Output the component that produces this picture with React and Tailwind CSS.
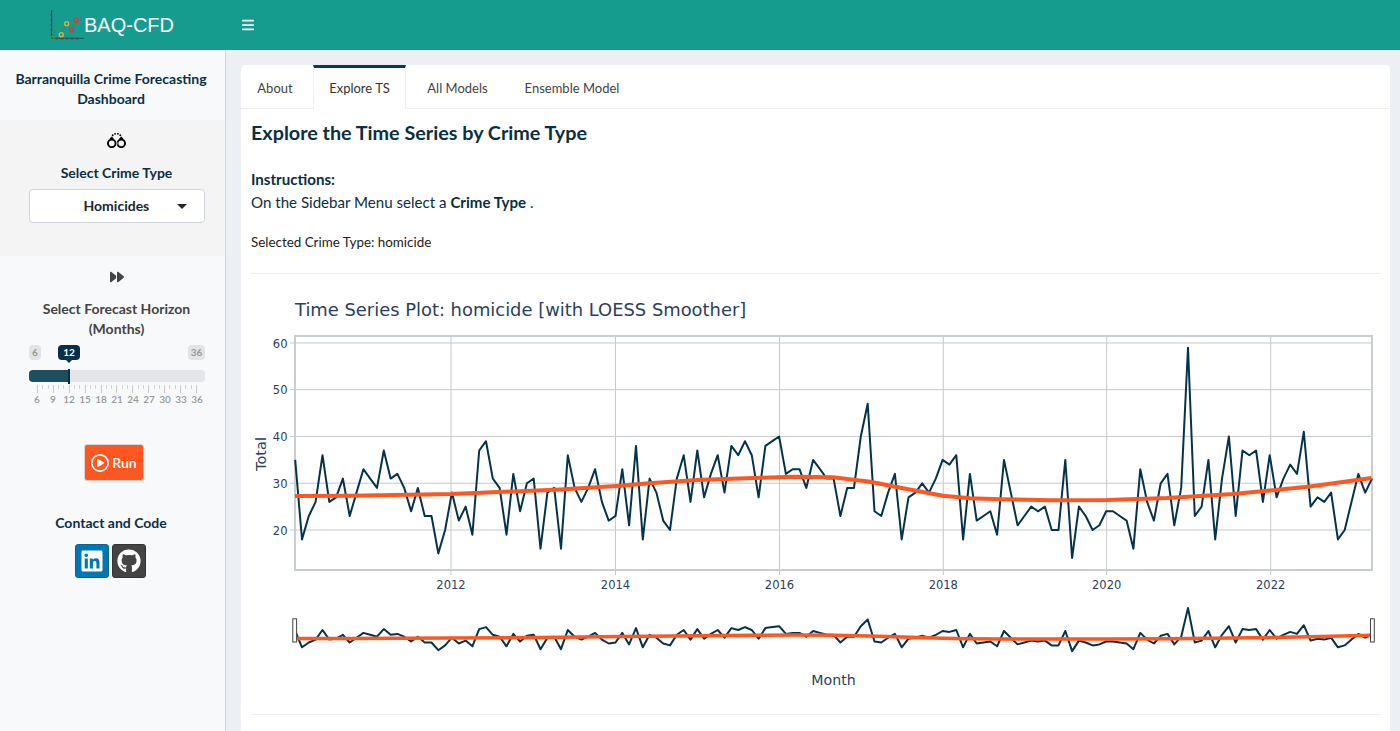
import React from "react";
import { FaBars, FaForward, FaGithub, FaLinkedin, FaRegCirclePlay, FaHandcuffs } from "react-icons/fa6";

const totals = [
  35, 18, 23, 26, 36, 26, 27, 31, 23, 28, 33, 31, 29, 37, 31, 32, 29, 24, 29, 23, 23, 15, 20, 28,
  22, 25, 19, 37, 39, 31, 29, 19, 32, 24, 30, 31, 16, 28, 29, 16, 36, 29, 26, 29, 33, 26, 22, 23,
  33, 21, 38, 18, 31, 28, 22, 20, 31, 36, 26, 37, 27, 32, 36, 28, 38, 36, 39, 36, 27, 38, 39, 40,
  32, 33, 33, 29, 35, 33, 31, 31, 23, 29, 29, 40, 47, 24, 23, 28, 32, 18, 27, 28, 30, 28, 31, 35,
  34, 36, 18, 32, 22, 23, 24, 19, 35, 28, 21, 23, 25, 24, 25, 20, 20, 35, 14, 25, 23, 20, 21, 24,
  24, 23, 22, 16, 33, 26, 22, 30, 32, 21, 29, 59, 23, 25, 35, 18, 31, 40, 23, 37, 36, 37, 26, 36,
  27, 31, 34, 32, 41, 25, 27, 26, 28, 18, 20, 26, 32, 28, 31,
];

// loess curve read off the plot, as [x, y] in page pixels
const loess = [
  [295, 497], [350, 496.8], [451, 495], [560, 490.5], [620, 486.7], [649, 484.3], [697, 481], [753, 479],
  [793, 477.7], [833, 478.3], [870, 482.7], [903, 489.3], [943, 496.7], [970, 499.3], [1000, 500.2],
  [1050, 501.3], [1107, 501], [1167, 499], [1233, 495], [1310, 487.5], [1371.5, 479],
];

const xOf = (i) => 295.2 + i * 6.815;
const mainLine = totals.map((v, i) => `${xOf(i).toFixed(1)},${(531 - (v - 20) * 4.675).toFixed(1)}`).join(" ");
const miniLine = totals.map((v, i) => `${xOf(i).toFixed(1)},${(648.3 - (v - 18) * 0.96).toFixed(1)}`).join(" ");
const mainLoess = loess.map(([x, y]) => `${x},${y}`).join(" ");
const miniLoess = loess.map(([x, y]) => `${x},${(639.4 - (497 - y) * 0.17).toFixed(1)}`).join(" ");

const xTicks = [
  [451, "2012"], [615.5, "2014"], [779.5, "2016"], [943.3, "2018"], [1106.7, "2020"], [1270.7, "2022"],
];
const yTicks = [
  [344, "60"], [390.7, "50"], [437.4, "40"], [484.2, "30"], [531, "20"],
];

const sliderTicks = Array.from({ length: 31 }, (_, i) => i);
const sliderLabels = [6, 9, 12, 15, 18, 21, 24, 27, 30, 33, 36];

const Logo = () => (
  <svg width="36" height="32" viewBox="50 10 36 32" className="mr-[-2px] shrink-0" fill="none">
    <path d="M51.7 11V39.3H84" stroke="#37474f" strokeWidth="1" />
    <path d="M50 16H52M50 21H52M50 26H52M50 31H52M50 36H52M57 38V41M62 38V41M67 38V41M72 38V41M77 38V41" stroke="#37474f" strokeWidth="0.7" />
    <path d="M52 38L57 30M59 33L61 34M62 33L66 27M68 26L71 29M72 29L76 23" stroke="#5f6f6f" strokeWidth="0.8" />
    <circle cx="51.7" cy="39.3" r="2" stroke="#2e9e4f" strokeWidth="1.3" />
    <circle cx="57.7" cy="28.3" r="2" stroke="#2e9e4f" strokeWidth="1.3" />
    <circle cx="61.3" cy="35.7" r="2" stroke="#f2b01e" strokeWidth="1.3" />
    <circle cx="66.7" cy="24.7" r="2" stroke="#f2b01e" strokeWidth="1.3" />
    <circle cx="71.7" cy="31" r="2" stroke="#e8322e" strokeWidth="1.3" />
    <circle cx="76.3" cy="21.3" r="2" stroke="#e8322e" strokeWidth="1.3" />
  </svg>
);

const Chart = () => (
  <svg width="1128" height="420" viewBox="251 285 1128 420" className="block">
    <g fontFamily="'DejaVu Sans', sans-serif">
      <text x="295" y="317" fontSize="17.9" fill="#2a3f5f">Time Series Plot: homicide [with LOESS Smoother]</text>

      {yTicks.map(([y, label]) => (
        <g key={label}>
          <line x1="296" x2="1372" y1={y} y2={y} stroke="#c6c9cd" strokeWidth="1" />
          <line x1="290" x2="295" y1={y} y2={y} stroke="#c6c9cd" strokeWidth="1" />
          <text x="287.5" y={y + 4.5} fontSize="11.5" textAnchor="end" fill="#2a3f5f">{label}</text>
        </g>
      ))}
      {xTicks.map(([x, label]) => (
        <g key={label}>
          <line x1={x} x2={x} y1="337" y2="576" stroke="#c6c9cd" strokeWidth="1" />
          <text x={x} y="590" fontSize="11.5" textAnchor="middle" fill="#2a3f5f">{label}</text>
        </g>
      ))}
      <rect x="295" y="337" width="1077" height="234" fill="none" stroke="#c9ced3" strokeWidth="2" />

      <text transform="translate(266 455) rotate(-90)" fontSize="14.5" textAnchor="middle" fill="#2a3f5f">Total</text>
      <text x="833.5" y="686" fontSize="14.2" textAnchor="middle" fill="#2a3f5f">Month</text>

      <polyline points={mainLine} fill="none" stroke="#05334a" strokeWidth="2" strokeLinejoin="round" />
      <polyline points={mainLoess} fill="none" stroke="#ff5722" strokeWidth="4" strokeLinejoin="round" />

      <polyline points={miniLine} fill="none" stroke="#05334a" strokeWidth="2" strokeLinejoin="round" />
      <polyline points={miniLoess} fill="none" stroke="#ff5722" strokeWidth="3.5" strokeLinejoin="round" />
      <rect x="292.8" y="619.8" width="3.8" height="23.2" fill="#fff" stroke="#444" strokeWidth="1" />
      <rect x="1370.5" y="619.8" width="3.8" height="23.2" fill="#fff" stroke="#444" strokeWidth="1" />
    </g>
  </svg>
);

const Sidebar = () => (
  <aside className="w-[226px] shrink-0 border-r border-[#d2d6de] bg-[#f8f9fb] text-[#0b2f42] font-bold text-[14px] leading-[20px]">
    <div className="pr-[3px] pt-[19px] pb-[11px] text-center">
      Barranquilla Crime Forecasting Dashboard
    </div>

    <div className="h-[136px] bg-[#f4f4f4] flex flex-col items-center pt-[11px] pl-[8px]">
      <FaHandcuffs className="text-[19px] text-black" />
      <div className="mt-[13px]">Select Crime Type</div>
      <div className="mt-[6px] w-[176px] h-[34px] rounded bg-white border border-[#ced4da] flex items-center text-[#212529] pl-[54px] pr-[17px] justify-between">
        <span>Homicides</span>
        <span className="w-0 h-0 border-x-[5px] border-x-transparent border-t-[5px] border-t-[#212529]"></span>
      </div>
    </div>

    <div className="flex flex-col items-center pl-[8px] text-[#444]">
      <FaForward className="mt-[14px] text-[14px] text-[#444]" />
      <div className="mt-[15px] text-center w-[190px]">Select Forecast Horizon (Months)</div>
    </div>

    <div className="mt-[6px] ml-[29px] w-[176px] relative">
      <div className="flex justify-between h-[15px]">
        <span className="w-[12px] rounded bg-[#e1e3e6] text-[#999] text-[10px] leading-[15px] text-center">6</span>
        <span className="w-[17px] rounded bg-[#e1e3e6] text-[#999] text-[10px] leading-[15px] text-center">36</span>
      </div>
      <div className="absolute left-[29px] top-0 w-[22px] h-[15px] rounded bg-[#05304a] text-white text-[10px] leading-[15px] text-center">
        12
        <span className="absolute left-[8px] top-[15px] w-0 h-0 border-x-[3px] border-x-transparent border-t-[3px] border-t-[#05304a]"></span>
      </div>

      <div className="relative mt-[10px] h-[12px] rounded-[4px] bg-[#e3e5e8]">
        <div className="h-[12px] w-[40px] rounded-l-[4px] bg-[#1f4e5f]"></div>
        <div className="absolute left-[39px] top-[-1px] w-[2px] h-[15px] bg-[#05304a]"></div>
      </div>

      <div className="mx-[8px] mt-[3px] flex justify-between items-start">
        {sliderTicks.map((i) => (
          <span key={i} className={i % 3 === 0 ? "w-px h-[8px] bg-[#c9c9c9]" : "w-px h-[4px] bg-[#d4d4d4]"}></span>
        ))}
      </div>
      <div className="mx-[8px] flex justify-between">
        {sliderLabels.map((n) => (
          <span key={n} className="w-0 flex justify-center text-[10px] leading-[12px] font-semibold text-[#999]">{n}</span>
        ))}
      </div>
    </div>

    <div className="flex justify-center mt-[39px] pl-[3px]">
      <button className="w-[60px] h-[37px] rounded-[3px] border border-[#e9cfc4] bg-[#ff5722] text-white flex items-center justify-center gap-[3px] font-semibold text-[14px]">
        <FaRegCirclePlay className="text-[18px]" />
        Run
      </button>
    </div>

    <div className="mt-[32px] pr-[3px] text-center text-[#0b2f42]">Contact and Code</div>
    <div className="mt-[11px] pr-[4px] flex justify-center gap-[3px]">
      <a className="w-[34px] h-[34px] rounded-[3px] bg-[#0077b5] border border-[#04659a] flex items-center justify-center">
        <FaLinkedin className="text-[24px] text-white" />
      </a>
      <a className="w-[34px] h-[34px] rounded-[3px] bg-[#444] border border-[#333] flex items-center justify-center">
        <FaGithub className="text-[24px] text-white" />
      </a>
    </div>
  </aside>
);

const Main = () => (
  <main className="flex-1 min-w-0 bg-[#ecf0f5] pl-[15px] pr-[10px] pt-[15px]">
    <div className="bg-white rounded-t-[4px] h-[700px] text-[#212529] text-[13px]">
      <div className="flex h-[44px] border-b border-[#eff0f1] text-[#444]">
        <div className="w-[72px] flex items-center justify-center pt-[5px] pr-[4px]">About</div>
        <div className="w-[93px] border-t-[3px] border-t-[#0b3a50] border-x border-x-[#eff0f1] h-[44px] bg-white flex items-center justify-center text-[#333]">
          Explore TS
        </div>
        <div className="w-[103px] flex items-center justify-center pt-[5px]">All Models</div>
        <div className="w-[126px] flex items-center justify-center pt-[5px]">Ensemble Model</div>
      </div>

      <div className="px-[10px]">
        <h2 className="mt-[10px] text-[19.75px] leading-[27px] font-bold text-[#0b2f42]">Explore the Time Series by Crime Type</h2>
        <div className="mt-[22px] text-[15.1px] leading-[23px] text-[#0b2f42]">
          <strong>Instructions:</strong>
          <br />
          On the Sidebar Menu select a <strong>Crime Type</strong> .
        </div>
        <div className="mt-[18px] text-[13.4px] leading-[20px] text-[#222]">Selected Crime Type: homicide</div>
        <hr className="mt-[21px] border-t border-[#eceeef]" />
        <div className="mt-[10px]">
          <Chart />
        </div>
        <hr className="mt-[10px] border-t border-[#eceeef]" />
      </div>
    </div>
  </main>
);

export default function App() {
  return (
    <div className="h-screen overflow-hidden flex flex-col font-['Lato',sans-serif]">
      <header className="h-[50px] shrink-0 bg-[#169b8f] flex items-center">
        <div className="w-[240px] flex items-center justify-start pl-[50px]">
          <Logo />
          <span className="font-['Liberation_Sans',sans-serif] text-[20px] text-white">BAQ-CFD</span>
        </div>
        <FaBars className="text-white text-[14px] ml-[1px]" />
      </header>
      <div className="flex flex-1 min-h-0">
        <Sidebar />
        <Main />
      </div>
    </div>
  );
}
